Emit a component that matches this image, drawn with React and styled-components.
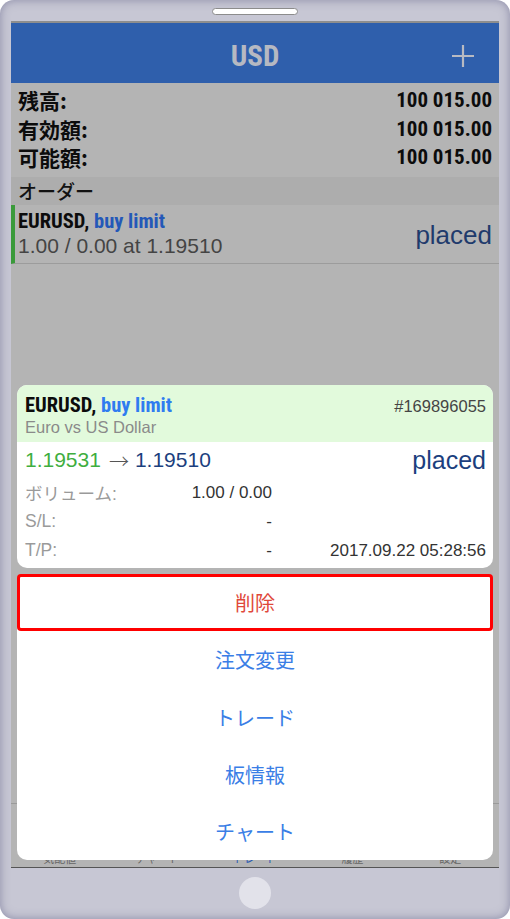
import React from "react";
import styled, { createGlobalStyle } from "styled-components";

const CJK = `"Noto Sans CJK JP"`;
const SANS = `"Liberation Sans", Arial, ${CJK}, sans-serif`;
const NARROW = `"Liberation Sans Narrow", "Roboto Condensed", "Liberation Sans", ${CJK}, sans-serif`;

const GlobalStyle = createGlobalStyle`
  html, body { margin: 0; padding: 0; background: #ffffff; }
  #root { width: 510px; height: 919px; }
  * { box-sizing: border-box; }
`;

const Phone = styled.div`
  width: 510px;
  height: 919px;
  border-radius: 14px;
  background: #c7c7d4;
  box-shadow: inset 0 0 10px rgba(90, 90, 130, 0.55);
  display: flex;
  flex-direction: column;
  align-items: center;
  font-family: ${SANS};
`;

const TopBezel = styled.div`
  height: 21px;
  width: 100%;
  display: flex;
  justify-content: center;
  padding-top: 8px;
`;

const Speaker = styled.div`
  width: 86px;
  height: 7px;
  background: #ffffff;
  border: 1px solid #8c8c8c;
  border-radius: 4px;
`;

const Screen = styled.div`
  position: relative;
  width: 488px;
  height: 847px;
  background: #b4b4b4;
  border-top: 2px solid #8e8e8e;
  border-bottom: 1px solid #555555;
  display: flex;
  flex-direction: column;
  overflow: hidden;
`;

const Header = styled.div`
  height: 60px;
  flex: none;
  background: #2f5fac;
  display: grid;
  grid-template-columns: 1fr auto 1fr;
  align-items: center;
  padding-top: 6px;
`;

const Title = styled.div`
  grid-column: 2;
  font-family: ${NARROW};
  font-weight: 700;
  font-size: 29px;
  color: #b6b9c2;
`;

const PlusWrap = styled.div`
  grid-column: 3;
  justify-self: end;
  padding-right: 24px;
  display: flex;
`;

const BalanceList = styled.div`
  padding: 3px 7px 5px 7px;
`;

const BalanceRow = styled.div`
  height: 28.5px;
  display: flex;
  align-items: center;
  justify-content: space-between;
  color: #0c0c0c;
`;

const BalanceLabel = styled.span`
  font-family: ${CJK}, sans-serif;
  font-weight: 700;
  font-size: 21px;
`;

const BalanceValue = styled.span`
  font-family: ${NARROW};
  font-weight: 700;
  font-size: 21px;
`;

const SectionHeader = styled.div`
  height: 28px;
  background: #adadad;
  display: flex;
  align-items: center;
  padding-left: 7px;
  font-family: ${CJK}, sans-serif;
  font-weight: 500;
  font-size: 19px;
  color: #121212;
`;

const OrderRow = styled.div`
  height: 59px;
  border-left: 4px solid #3a9a3a;
  border-bottom: 1px solid #9c9c9c;
  display: flex;
  align-items: center;
  justify-content: space-between;
  padding: 0 7px 0 3px;
`;

const OrderInfo = styled.div`
  display: flex;
  flex-direction: column;
  gap: 1px;
`;

const Symbol = styled.span`
  font-family: ${NARROW};
  font-weight: 700;
  font-size: 20.5px;
  color: #0c0c0c;
`;

const TypeText = styled.span`
  font-family: ${NARROW};
  font-weight: 700;
  font-size: 20.5px;
  color: ${(p) => p.$color};
`;

const SubLine = styled.div`
  font-size: 21px;
  color: #444444;
`;

const Status = styled.div`
  font-size: ${(p) => p.$size}px;
  color: ${(p) => p.$color};
  padding-top: ${(p) => p.$drop || 0}px;
`;

const Spacer = styled.div`
  flex: 1;
`;

const TabBar = styled.div`
  height: 64px;
  flex: none;
  border-top: 1px solid #9a9a9a;
  display: grid;
  grid-template-columns: repeat(5, 1fr);
  align-items: end;
`;

const TabLabel = styled.div`
  text-align: center;
  font-family: ${CJK}, sans-serif;
  font-size: 11px;
  color: ${(p) => (p.$active ? "#2a5ab0" : "#666666")};
  padding-bottom: 1px;
`;

const Overlay = styled.div`
  position: absolute;
  inset: 0;
  display: flex;
  flex-direction: column;
  justify-content: flex-end;
  gap: 6px;
  padding: 0 6px 7px 6px;
`;

const Card = styled.div`
  background: #ffffff;
  border-radius: 10px;
  overflow: hidden;
`;

const CardHeader = styled.div`
  background: #e2fadc;
  height: 57px;
  padding: 8px 7px 0 8px;
  display: flex;
  flex-direction: column;
`;

const HeaderTop = styled.div`
  display: flex;
  justify-content: space-between;
  align-items: baseline;
`;

const Ticket = styled.span`
  font-size: 16.5px;
  color: #444444;
`;

const Description = styled.div`
  font-size: 16.5px;
  color: #8a8a8a;
  margin-top: 1px;
`;

const CardBody = styled.div`
  padding: 0 7px 3px 8px;
`;

const PriceLine = styled.div`
  height: 36px;
  display: flex;
  align-items: center;
  justify-content: space-between;
`;

const Prices = styled.div`
  font-size: 21px;
  display: flex;
  align-items: center;
`;

const Price = styled.span`
  color: ${(p) => p.$color};
`;

const Arrow = styled.span`
  font-family: ${CJK}, sans-serif;
  font-weight: 300;
  font-size: 20px;
  color: #555555;
  margin: 0 6px 0 8px;
`;

const InfoRow = styled.div`
  height: 29px;
  display: grid;
  grid-template-columns: 160px 87px 1fr;
  align-items: center;
  font-size: 17px;
`;

const InfoLabel = styled.span`
  font-family: "Liberation Sans", ${CJK}, sans-serif;
  font-size: 17.5px;
  color: #9a9a9a;
`;

const InfoValue = styled.span`
  text-align: right;
  color: #333333;
`;

const Sheet = styled.div`
  background: #ffffff;
  border-radius: 10px;
  display: flex;
  flex-direction: column;
`;

const SheetItem = styled.div`
  height: 57.2px;
  display: flex;
  align-items: center;
  justify-content: center;
  font-family: ${CJK}, sans-serif;
  font-size: 20px;
  color: ${(p) => (p.$danger ? "#e0483a" : "#3a7ee6")};
  border-radius: 4px;
  box-shadow: ${(p) => (p.$highlight ? "inset 0 0 0 3px #ff0000" : "none")};
`;

const BottomBezel = styled.div`
  flex: 1;
  width: 100%;
  display: flex;
  align-items: center;
  justify-content: center;
  padding-bottom: 2px;
`;

const HomeButton = styled.div`
  width: 32px;
  height: 32px;
  border-radius: 50%;
  background: #e2e2ea;
`;

const PlusIcon = () => (
  <svg width="24" height="24" viewBox="0 0 24 24">
    <path d="M12 1v22M1 12h22" stroke="#b8bac2" strokeWidth="2.2" fill="none" />
  </svg>
);

const balances = [
  ["残高:", "100 015.00"],
  ["有効額:", "100 015.00"],
  ["可能額:", "100 015.00"],
];

const tabs = ["気配値", "チャート", "トレード", "履歴", "設定"];
const actions = ["削除", "注文変更", "トレード", "板情報", "チャート"];

export default function App() {
  return (
    <>
      <GlobalStyle />
      <Phone>
        <TopBezel>
          <Speaker />
        </TopBezel>
        <Screen>
          <Header>
            <Title>USD</Title>
            <PlusWrap>
              <PlusIcon />
            </PlusWrap>
          </Header>
          <BalanceList>
            {balances.map(([l, v]) => (
              <BalanceRow key={l}>
                <BalanceLabel>{l}</BalanceLabel>
                <BalanceValue>{v}</BalanceValue>
              </BalanceRow>
            ))}
          </BalanceList>
          <SectionHeader>オーダー</SectionHeader>
          <OrderRow>
            <OrderInfo>
              <div>
                <Symbol>EURUSD, </Symbol>
                <TypeText $color="#2458b8">buy limit</TypeText>
              </div>
              <SubLine>1.00 / 0.00 at 1.19510</SubLine>
            </OrderInfo>
            <Status $size={26} $drop={4} $color="#1f3b6c">placed</Status>
          </OrderRow>
          <Spacer />
          <TabBar>
            {tabs.map((t, i) => (
              <TabLabel key={t} $active={i === 2}>
                {t}
              </TabLabel>
            ))}
          </TabBar>

          <Overlay>
            <Card>
              <CardHeader>
                <HeaderTop>
                  <div>
                    <Symbol>EURUSD, </Symbol>
                    <TypeText $color="#2f7cf0">buy limit</TypeText>
                  </div>
                  <Ticket>#169896055</Ticket>
                </HeaderTop>
                <Description>Euro vs US Dollar</Description>
              </CardHeader>
              <CardBody>
                <PriceLine>
                  <Prices>
                    <Price $color="#3fae3f">1.19531</Price>
                    <Arrow>→</Arrow>
                    <Price $color="#1c3f7e">1.19510</Price>
                  </Prices>
                  <Status $size={25} $color="#1c3f7e">placed</Status>
                </PriceLine>
                <InfoRow>
                  <InfoLabel>ボリューム:</InfoLabel>
                  <InfoValue>1.00 / 0.00</InfoValue>
                  <InfoValue />
                </InfoRow>
                <InfoRow>
                  <InfoLabel>S/L:</InfoLabel>
                  <InfoValue>-</InfoValue>
                  <InfoValue />
                </InfoRow>
                <InfoRow>
                  <InfoLabel>T/P:</InfoLabel>
                  <InfoValue>-</InfoValue>
                  <InfoValue>2017.09.22 05:28:56</InfoValue>
                </InfoRow>
              </CardBody>
            </Card>
            <Sheet>
              {actions.map((a, i) => (
                <SheetItem key={a} $danger={i === 0} $highlight={i === 0}>
                  {a}
                </SheetItem>
              ))}
            </Sheet>
          </Overlay>
        </Screen>
        <BottomBezel>
          <HomeButton />
        </BottomBezel>
      </Phone>
    </>
  );
}
